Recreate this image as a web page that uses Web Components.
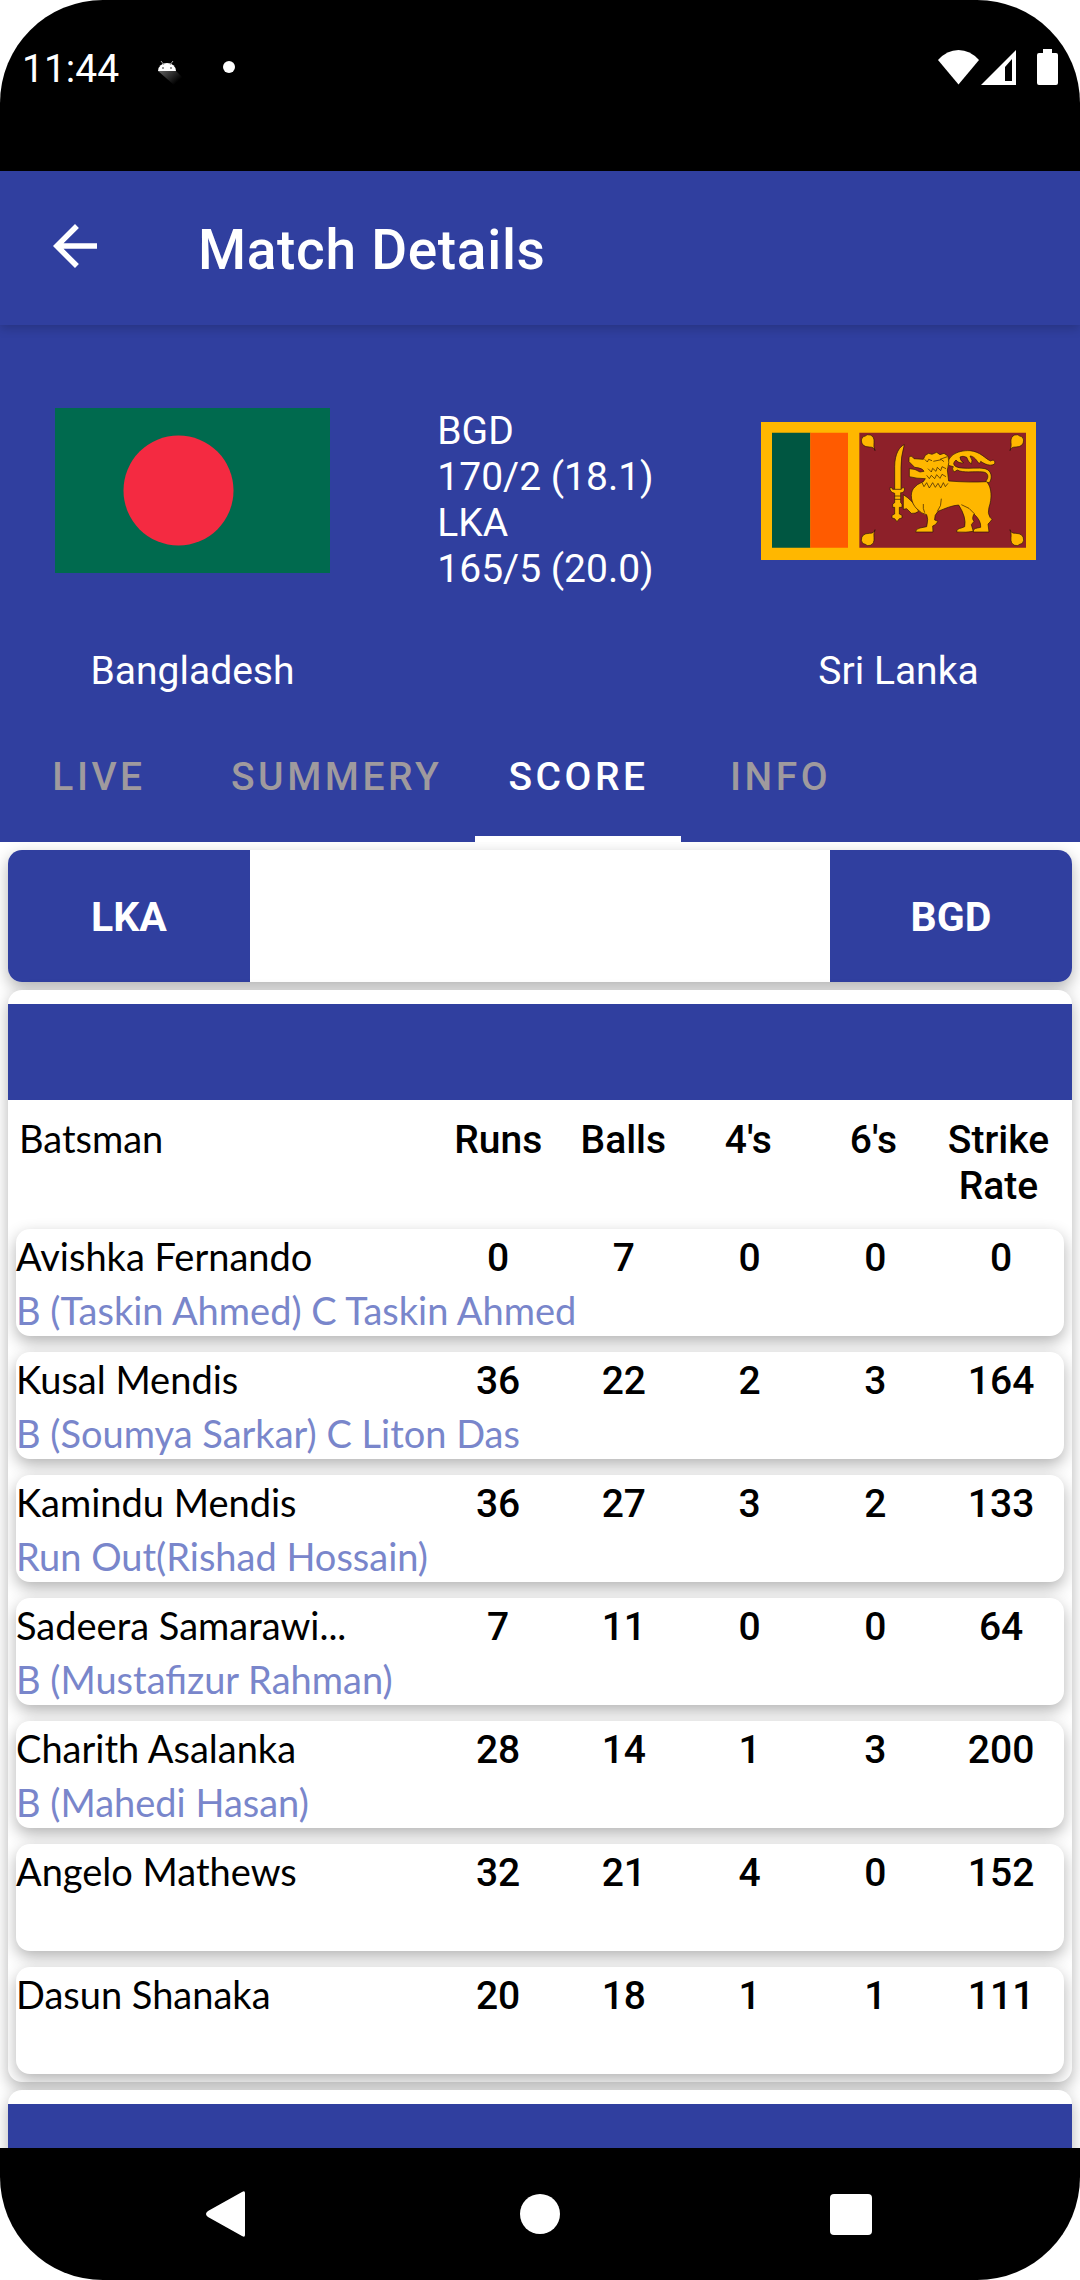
<!DOCTYPE html>
<html lang="en">
<head>
<meta charset="utf-8">
<meta name="viewport" content="width=device-width">
<title>Match Details</title>
<style>
  html, body { margin: 0; background: #fff; }
  body { font-family: Roboto, sans-serif; font-size: 39px; line-height: 46px; color: #000; --brand: #303f9f; --lift: 0 6px 16px rgba(0,0,0,.3); }
</style>
</head>
<body>
<phone-screen>
  <status-bar slot="top" time="11:44"></status-bar>
  <app-bar slot="top" heading="Match Details"></app-bar>
  <match-header slot="top">
    <team-badge slot="home" name="Bangladesh"><flag-icon country="bgd"></flag-icon></team-badge>
    <div>BGD</div><div>170/2 (18.1)</div><div>LKA</div><div>165/5 (20.0)</div>
    <team-badge slot="away" name="Sri Lanka"><flag-icon country="lka"></flag-icon></team-badge>
  </match-header>
  <tab-strip slot="top" tabs="LIVE,SUMMERY,SCORE,INFO" selected="SCORE"></tab-strip>
  <team-switch left="LKA" right="BGD"></team-switch>
  <innings-card><batting-table></batting-table></innings-card>
  <innings-card></innings-card>
  <nav-bar slot="bottom"></nav-bar>
</phone-screen>

<script>
class Base extends HTMLElement {
  connectedCallback() {
    if (this.shadowRoot) return;
    this.attachShadow({ mode: 'open' }).innerHTML =
      `<style>:host,*{box-sizing:border-box}button{font:inherit;color:inherit;border:0;margin:0;padding:0;background:none;cursor:pointer}svg{display:block}${this.css()}</style>${this.html()}`;
  }
  css() { return ':host{display:block}'; }
  html() { return '<slot></slot>'; }
}

customElements.define('phone-screen', class extends Base {
  css() { return `
    :host{display:flex;flex-direction:column;height:100vh;border-radius:103px;overflow:hidden}
    header,footer{flex:none}
    main{flex:1;min-height:0;overflow:hidden;display:flex;flex-direction:column;gap:8px;padding:8px 8px 0}`; }
  html() { return '<header><slot name="top"></slot></header><main><slot></slot></main><footer><slot name="bottom"></slot></footer>'; }
});

customElements.define('status-bar', class extends Base {
  css() { return `
    :host{display:flex;align-items:flex-start;background:#000;color:#fff;height:171px;padding:46px 22px 0}
    .left,.right{display:flex}
    .left{flex:1;gap:38px}`; }
  html() { return `
    <div class="left"><span>${this.getAttribute('time')}</span>
      <svg width="28" height="46" viewBox="0 0 28 46" aria-hidden="true">
        <defs><linearGradient id="g" x1="4" y1="22" x2="18" y2="38" gradientUnits="userSpaceOnUse"><stop stop-color="#666"/><stop offset="1" stop-color="#000"/></linearGradient></defs>
        <path d="M1 25h18l8 8-8 7-2-1z" fill="url(#g)"/>
        <path d="M1 25a9 8 0 0 1 18 0z" fill="#fff"/>
        <path d="M4 15l3 4M16 15l-3 4" stroke="#aaa" stroke-width="1"/>
        <circle cx="6" cy="22" r="1" fill="#777"/><circle cx="14" cy="22" r="1" fill="#777"/>
      </svg>
      <svg width="12" height="46" viewBox="0 0 12 46" aria-hidden="true"><circle cx="6" cy="21" r="6" fill="#fff"/></svg>
    </div>
    <div class="right">
      <svg width="42" height="46" viewBox="0 0 42 46" fill="#fff" aria-hidden="true"><path d="M0 14Q9 4 20.500 4T41 14L20.500 38.500z"/></svg>
      <svg width="36" height="46" viewBox="0 0 36 46" fill="#fff" aria-hidden="true"><path fill-rule="evenodd" d="M1 39L36 4v35zM25 21v14h7V13z"/></svg>
      <svg width="42" height="46" viewBox="0 0 42 46" fill="#fff" aria-hidden="true"><path d="M23 7h4V3h9v4h4q2 0 2 2v28q0 2-2 2H23q-2 0-2-2V9q0-2 2-2z"/></svg>
    </div>`; }
});

customElements.define('app-bar', class extends Base {
  css() { return `
    :host{display:flex;align-items:center;gap:90px;height:154px;padding:0 42px;background:var(--brand);color:#fff;position:relative;box-shadow:0 3px 10px rgba(0,0,0,.2)}
    h1{margin:0;font-size:55px;font-weight:500;line-height:64px;letter-spacing:.0125em;padding-top:4px}
    button{padding-bottom:4px}`; }
  html() { return `
    <button aria-label="Back"><svg width="66" height="66" viewBox="0 0 24 24" fill="#fff"><path d="M20 11H7.830l5.590-5.590L12 4l-8 8 8 8 1.410-1.410L7.830 13H20v-2z"/></svg></button>
    <h1>${this.getAttribute('heading')}</h1>`; }
});

customElements.define('match-header', class extends Base {
  css() { return `
    :host{display:flex;justify-content:space-between;background:var(--brand);color:#fff;padding:83px 44px 16px 55px}`; }
  html() { return '<slot name="home"></slot><div><slot></slot></div><slot name="away"></slot>'; }
});

customElements.define('team-badge', class extends Base {
  css() { return `
    :host{display:flex;flex-direction:column;align-items:center;gap:75px}
    .flag{display:flex;align-items:center;height:165px}`; }
  html() { return `<div class="flag"><slot></slot></div><div>${this.getAttribute('name')}</div>`; }
});

const FLAGS = {
  bgd: `<svg width="275" height="165" viewBox="0 0 275 165" role="img" aria-label="Flag of Bangladesh"><path fill="#006a4e" d="M0 0h275v165H0z"/><circle cx="123.500" cy="82.500" r="55" fill="#f42a41"/></svg>`,
  lka: `<svg width="275" height="138" viewBox="63 66 825 414" role="img" aria-label="Flag of Sri Lanka">
    <path fill="#ffb700" d="M63 66h825v414H63z"/><path fill="#005641" d="M96 98h115v345H96z"/><path fill="#ff5b00" d="M211 98h113v345H211z"/><path fill="#8d2029" d="M358 98h500v345H358z"/>
    <g fill="#ffb700" stroke="#2b1408" stroke-width="2" stroke-linejoin="round">
      <path id="leaf" d="M405 152Q403 141 388 141Q364 141 364 120Q366 108 376 108Q380 102 391 105Q404 110 402 128Q400 139 405 152z"/>
      <use href="#leaf" transform="matrix(-1 0 0 1 1215 0)"/>
      <use href="#leaf" transform="matrix(1 0 0 -1 0 541)"/>
      <use href="#leaf" transform="matrix(-1 0 0 -1 1215 541)"/>
      <path d="M625 196C620 170 650 150 690 152C722 155 735 176 752 183C762 176 768 186 762 193C750 199 735 193 722 184C722 190 716 192 712 184C704 172 696 168 690 168Q700 182 694 192Q684 186 680 172Q668 166 660 171Q660 183 671 188Q656 191 648 180Q634 192 648 200Q658 204 664 204C690 207 715 202 735 206C757 212 757 235 748 248L735 246C748 234 746 218 730 216C700 213 670 220 652 210L642 216Q634 205 640 200z"/>
      <path d="M490 284C510 296 524 312 536 334Q526 342 514 340L500 326L490 328z"/>
      <path d="M626 243Q690 248 740 245C756 262 756 296 747 322Q742 340 750 352L756 358L750 366L744 372L747 396H700Q698 386 712 384L722 382Q724 362 702 342Q694 356 702 364L694 374L700 394Q680 398 650 396Q650 386 664 384L674 380Q680 352 656 315C636 316 614 326 594 334Q582 346 584 360L594 364L586 374L578 378L579 396H527Q526 387 540 384L560 380Q566 356 560 344Q545 342 530 326C512 308 510 280 520 266Q530 252 550 245L556 236Q530 236 508 230V206Q526 206 540 216L552 214Q548 204 524 202L507 185V172Q514 164 522 176L550 178L556 166L566 160L576 163L590 157L600 164L612 160L624 168Q630 186 622 210z"/>
      <path d="M493 134C480 138 464 160 464 200V270H483V204Q482 172 493 134z"/>
      <path d="M450 262Q458 262 458 268H484Q486 260 494 264Q494 278 484 278H482V308L486 312V322L478 322V342L486 346V354L478 356L471 365L464 356L456 354V346L464 342V322L458 322V312L464 308V280Q448 276 450 262z"/>
    </g>
    <g fill="none" stroke="#2b1408" stroke-width="2">
      <path d="M554 178l8 8 4-8 10 4M580 184l24-5 8 6M600 178l22-8M564 206l10 10 4-11 10 9 4-12 10 10 4-12 12 6M560 226l8 10 6-10 10 10 6-12 10 11 6-12 12 7M546 248l6 12 8-12 8 16 10-16 8 14 8-12 8 14 8-16 6 12 8-10"/>
      <path d="M604 296Q605 318 592 334M550 312Q548 326 554 338M664 314Q690 322 704 342M464 288h18M464 298h18"/>
    </g></svg>`
};
customElements.define('flag-icon', class extends Base {
  html() { return FLAGS[this.getAttribute('country')]; }
});

customElements.define('tab-strip', class extends Base {
  css() { return `
    :host{display:flex;background:var(--brand);height:132px}
    button{min-width:198px;padding:8px 33px 0;color:#9f9a9e;font-weight:500;letter-spacing:.09em;border-bottom:6px solid transparent}
    button[aria-selected=true]{color:#fff;border-bottom-color:#fff}`; }
  html() {
    const sel = this.getAttribute('selected');
    return this.getAttribute('tabs').split(',').map(t => `<button role="tab" aria-selected="${t === sel}">${t}</button>`).join('');
  }
});

customElements.define('team-switch', class extends Base {
  css() { return `
    :host{display:flex;flex:none;justify-content:space-between;height:132px;border-radius:14px;overflow:hidden;background:#fff;box-shadow:var(--lift)}
    button{width:242px;padding-top:2px;background:var(--brand);color:#fff;font-weight:700;font-size:41px}`; }
  html() { return `<button>${this.getAttribute('left')}</button><button>${this.getAttribute('right')}</button>`; }
});

customElements.define('innings-card', class extends Base {
  css() { return `
    :host{display:block;flex:none;border-radius:14px;overflow:hidden;background:#fff;padding-top:14px;box-shadow:var(--lift)}
    .band{height:96px;background:var(--brand)}`; }
  html() { return '<div class="band"></div><slot></slot>'; }
});

const BATTING = [
  ['Avishka Fernando', 0, 7, 0, 0, 0, 'B (Taskin Ahmed) C Taskin Ahmed'],
  ['Kusal Mendis', 36, 22, 2, 3, 164, 'B (Soumya Sarkar) C Liton Das'],
  ['Kamindu Mendis', 36, 27, 3, 2, 133, 'Run Out(Rishad Hossain)'],
  ['Sadeera Samarawi...', 7, 11, 0, 0, 64, 'B (Mustafizur Rahman)'],
  ['Charith Asalanka', 28, 14, 1, 3, 200, 'B (Mahedi Hasan)'],
  ['Angelo Mathews', 32, 21, 4, 0, 152, ''],
  ['Dasun Shanaka', 20, 18, 1, 1, 111, '']
];
customElements.define('batting-table', class extends Base {
  css() { return `
    :host{display:block;padding:17px 8px 8px}
    table{display:flex;flex-direction:column;gap:16px}
    thead,tbody{display:block}
    thead{padding:0 3px 4px}
    tbody{border-radius:14px;background:#fff;box-shadow:var(--lift)}
    tr{display:grid;grid-template-columns:40% repeat(5,12%);align-items:baseline}
    th,td{display:block;padding:0;font-weight:500;text-align:center}
    .name,.out{font-family:Lato,sans-serif;font-size:38px;font-weight:400;text-align:left}
    thead .name{line-height:42px}
    tbody .name{line-height:54px}
    .out{grid-column:1/-1;height:53px;line-height:54px;color:#7986cb}`; }
  html() {
    const head = ['Runs', 'Balls', "4's", "6's", 'Strike Rate'].map(h => `<th scope="col">${h}</th>`).join('');
    const rows = BATTING.map(([name, ...rest]) => {
      const out = rest.pop();
      return `<tbody><tr><th class="name" scope="row">${name}</th>${rest.map(n => `<td>${n}</td>`).join('')}</tr><tr><td class="out" colspan="6">${out}</td></tr></tbody>`;
    }).join('');
    return `<table><thead><tr><th class="name" scope="col">Batsman</th>${head}</tr></thead>${rows}</table>`;
  }
});

customElements.define('nav-bar', class extends Base {
  css() { return ':host{display:flex;justify-content:center;align-items:center;gap:245px;height:132px;background:#000}'; }
  html() { return `
    <button aria-label="Back"><svg width="66" height="66" viewBox="0 0 66 66" fill="#fff"><path d="M46 11Q49 9 49 12V54Q49 57 46 55L12 36Q8 33 12 30z"/></svg></button>
    <button aria-label="Home"><svg width="66" height="66" viewBox="0 0 66 66" fill="#fff"><circle cx="33" cy="33" r="20"/></svg></button>
    <button aria-label="Recents"><svg width="66" height="66" viewBox="0 0 66 66" fill="#fff"><rect x="12" y="13" width="42" height="41" rx="4"/></svg></button>`; }
});
</script>
</body>
</html>
